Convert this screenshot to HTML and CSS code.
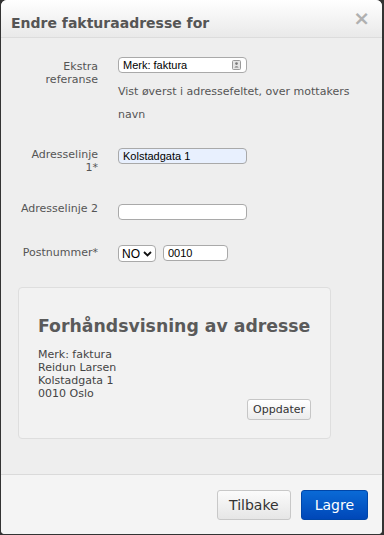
FILE: index.html
```html
<!DOCTYPE html>
<html lang="no">
<head>
    <meta charset="UTF-8">
    <meta name="viewport" content="width=device-width, initial-scale=1.0">
    <title>Endre fakturaadresse</title>
    <link rel="stylesheet" href="styles.css">
</head>
<body>
    <div class="dialog">
        <div class="dialog-header">
            <h1>Endre fakturaadresse for</h1>
            <span class="close">&times;</span>
        </div>
        <div class="dialog-body">
            <div class="form-row row-ref">
                <label for="ref">Ekstra referanse</label>
                <div class="field">
                    <div class="input-wrap">
                        <input type="text" id="ref" class="input wide" value="Merk: faktura">
                        <svg class="contact-icon" width="9" height="10" viewBox="0 0 9 10">
                            <rect x="0.5" y="0.5" width="8" height="9" rx="1" fill="#e4e4e4" stroke="#999"/>
                            <circle cx="4.5" cy="3.6" r="1.3" fill="#777"/>
                            <path d="M2.3 7.6 Q4.5 4.9 6.7 7.6 Z" fill="#777"/>
                        </svg>
                    </div>
                    <p class="help">Vist øverst i adressefeltet, over mottakers navn</p>
                </div>
            </div>
            <div class="form-row row-line1">
                <label for="line1">Adresselinje 1*</label>
                <div class="field">
                    <input type="text" id="line1" class="input wide filled" value="Kolstadgata 1">
                </div>
            </div>
            <div class="form-row row-line2">
                <label for="line2">Adresselinje 2</label>
                <div class="field">
                    <input type="text" id="line2" class="input wide" value="">
                </div>
            </div>
            <div class="form-row row-post">
                <label for="post">Postnummer*</label>
                <div class="field inline">
                    <div class="select-box">
                        <span>NO</span>
                        <svg width="9" height="6" viewBox="0 0 9 6">
                            <path d="M1 1 L4.5 4.5 L8 1" fill="none" stroke="#111" stroke-width="1.8"/>
                        </svg>
                    </div>
                    <input type="text" id="post" class="input short" value="0010">
                </div>
            </div>

            <div class="preview">
                <h2>Forhåndsvisning av adresse</h2>
                <div class="address">
                    Merk: faktura<br>
                    Reidun Larsen<br>
                    Kolstadgata 1<br>
                    0010 Oslo
                </div>
                <div class="preview-actions">
                    <button class="btn-small">Oppdater</button>
                </div>
            </div>
        </div>
        <div class="dialog-footer">
            <button class="btn">Tilbake</button>
            <button class="btn btn-primary">Lagre</button>
        </div>
    </div>
</body>
</html>
```

FILE: styles.css
```css
html, body {
    margin: 0;
    padding: 0;
    height: 100%;
}
body {
    background-color: #333;
    font-family: "DejaVu Sans", Verdana, sans-serif;
    color: #555;
}
.dialog {
    margin: 0 2px 0 1px;
    height: 534px;
    background-color: #eeeeee;
    border-radius: 6px 6px 4px 4px;
    overflow: hidden;
    display: flex;
    flex-direction: column;
}
.dialog-header {
    height: 37px;
    border-bottom: 1px solid #dcdcdc;
    background: linear-gradient(#ffffff, #e9e9e9);
    display: flex;
    align-items: center;
    justify-content: space-between;
    padding: 0 12px 0 10px;
}
.dialog-header h1 {
    margin: 8px 0 0 0;
    font-size: 14px;
    font-weight: bold;
    color: #555;
}
.close {
    font-size: 20px;
    font-weight: bold;
    color: #b0b0b0;
    margin-top: -1px;
}
.dialog-body {
    flex: 1;
    padding: 19px 0 0 17px;
}
.form-row {
    display: grid;
    grid-template-columns: 80px 240px;
    column-gap: 20px;
}
.form-row label {
    text-align: right;
    font-size: 11px;
    line-height: 13px;
    padding-top: 3px;
    color: #555;
}
.row-ref {
    margin-bottom: 19px;
}
.row-line1 {
    margin-bottom: 27px;
}
.row-line2 {
    margin-bottom: 25px;
}
.row-line2 label,
.row-post label {
    padding-top: 1px;
}
.row-post {
    margin-bottom: 25px;
}
.field.inline {
    display: flex;
    gap: 7px;
}
.input-wrap {
    display: flex;
    align-items: center;
    width: 129px;
}
.input {
    box-sizing: border-box;
    height: 16px;
    border: 1px solid #a9a9a9;
    border-radius: 4px;
    padding: 0 4px;
    font-family: "Liberation Sans", Arial, sans-serif;
    font-size: 11px;
    color: #000;
    background-color: #fff;
    outline: none;
}
.input.wide {
    width: 129px;
}
.input.short {
    width: 65px;
}
.input.filled {
    background-color: #e8f0fe;
}
.contact-icon {
    margin-left: -15px;
}
.help {
    margin: 7px 0 0 0;
    font-size: 11px;
    line-height: 23px;
    color: #555;
}
.select-box {
    box-sizing: border-box;
    width: 38px;
    height: 17px;
    border: 1px solid #a9a9a9;
    border-radius: 4px;
    background-color: #fff;
    display: flex;
    align-items: center;
    gap: 3px;
    padding-left: 3px;
    font-family: "Liberation Sans", Arial, sans-serif;
    font-size: 12px;
    color: #000;
}
.preview {
    box-sizing: border-box;
    width: 313px;
    height: 152px;
    background-color: #f2f2f2;
    border: 1px solid #dedede;
    border-radius: 4px;
    padding: 0 19px;
}
.preview h2 {
    margin: 28px 0 12px 0;
    font-size: 17.3px;
    line-height: 20px;
    font-weight: bold;
    color: #5a5a5a;
    white-space: nowrap;
}
.address {
    font-size: 11px;
    line-height: 13px;
    color: #444;
}
.preview-actions {
    display: flex;
    justify-content: flex-end;
    margin-top: -1px;
}
.btn-small {
    height: 21px;
    padding: 0 5px;
    font-family: "DejaVu Sans", Verdana, sans-serif;
    font-size: 11px;
    color: #333;
    background: linear-gradient(#ffffff, #ececec);
    border: 1px solid #c6c6c6;
    border-radius: 3px;
}
.dialog-footer {
    box-sizing: border-box;
    height: 60px;
    border-top: 1px solid #dadada;
    background-color: #f4f4f4;
    display: flex;
    justify-content: flex-end;
    align-items: flex-start;
    gap: 10px;
    padding: 15px 14px 0 0;
}
.btn {
    height: 30px;
    padding: 0 11px;
    font-family: "DejaVu Sans", Verdana, sans-serif;
    font-size: 14px;
    color: #333;
    background: linear-gradient(#fbfbfb, #e6e6e6);
    border: 1px solid #c8c8c8;
    border-radius: 3px;
    cursor: pointer;
}
.btn-primary {
    color: #fff;
    background: linear-gradient(#0a6ad6, #0047b8);
    border-color: #0046a8;
    padding: 0 13px;
}
```
